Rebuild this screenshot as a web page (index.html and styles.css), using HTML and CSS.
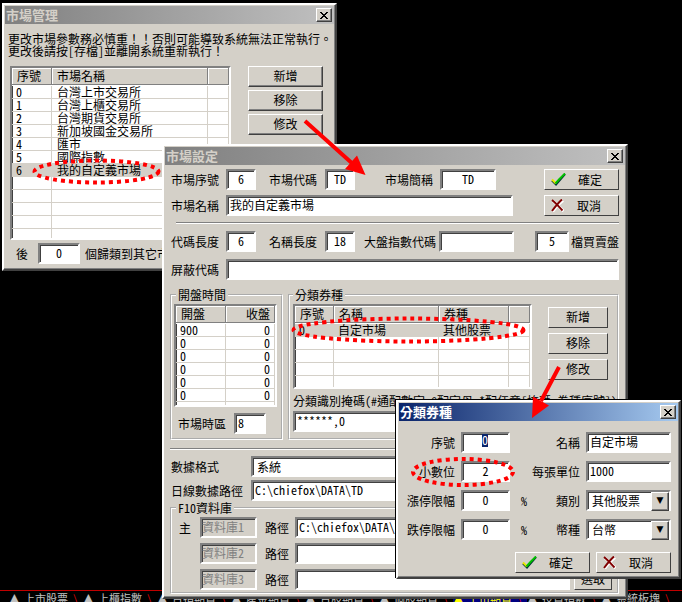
FILE: index.html
```html
<!DOCTYPE html>
<html lang="zh-Hant">
<head>
<meta charset="utf-8">
<meta name="viewport" content="width=device-width, initial-scale=1">
<title>市場管理</title>
<link rel="stylesheet" href="styles.css">
</head>
<body>
<svg class="defs" aria-hidden="true">
  <symbol id="close" viewBox="0 0 8 7"><path d="M0 0h2v1h1v1h2V1h1V0h2v1H7v1H6v1H5v1h1v1h1v1h1v1H6V6H5V5H3v1H2v1H0V6h1V5h1V4h1V3H2V2H1V1H0z"/></symbol>
  <symbol id="check" viewBox="0 0 15 13"><path d="M1 7.500l4 4L14 1" fill="none" stroke="#033" stroke-width="2"/><path d="M1 6.500l4 4" fill="none" stroke="#e8e800" stroke-width="2"/><path d="M4.500 10.500L8 6.500 14 .5" fill="none" stroke="#00c000" stroke-width="2"/></symbol>
  <symbol id="cross" viewBox="0 0 13 13"><path d="M1.500 1.500C5 4 8 8 12 11.500M11.500 1C7 4 4 8 1 12" fill="none" stroke="#fff" stroke-width="3" transform="translate(.6 .6)"/><path d="M1 1C5 4 8 8 11.500 11.500M11 .5C7 4 4 8 1 12" fill="none" stroke="#800000" stroke-width="2"/></symbol>
</svg>

<nav class="tabs" aria-label="板塊">
  <a href="#t1">上市股票</a><a href="#t2">上櫃指數</a><a href="#t3">台指期貨</a><a href="#t4">產金期貨</a><a href="#t5">台股期貨</a><a href="#t6">個股期貨</a><a href="#t7" class="current">上市期貨</a><a href="#t8">投資指數</a><a href="#t9">系統板塊</a>
</nav>

<section class="window manager" aria-labelledby="manager-title">
  <header class="titlebar"><h1 id="manager-title">市場管理</h1><button class="close" aria-label="關閉"><svg><use href="#close"/></svg></button></header>
  <div class="body">
    <p>更改市場參數務必慎重！！否則可能導致系統無法正常執行。<br>更改後請按<span class="half">[</span>存檔<span class="half">]</span>並離開系統重新執行！</p>
    <div class="list-and-actions">
      <div class="list markets">
        <table>
          <colgroup><col class="c-no"><col class="c-name"><col></colgroup>
          <thead><tr><th>序號</th><th>市場名稱</th><th></th></tr></thead>
          <tbody>
            <tr><td>0</td><td>台灣上市交易所</td><td></td></tr>
            <tr><td>1</td><td>台灣上櫃交易所</td><td></td></tr>
            <tr><td>2</td><td>台灣期貨交易所</td><td></td></tr>
            <tr><td>3</td><td>新加坡國金交易所</td><td></td></tr>
            <tr><td>4</td><td>匯市</td><td></td></tr>
            <tr><td>5</td><td>國際指數</td><td></td></tr>
            <tr class="selected"><td>6</td><td>我的自定義市場</td><td></td></tr>
            <tr><td></td><td></td><td></td></tr>
            <tr><td></td><td></td><td></td></tr>
            <tr><td></td><td></td><td></td></tr>
            <tr><td></td><td></td><td></td></tr>
            <tr><td></td><td></td><td></td></tr>
          </tbody>
        </table>
      </div>
      <div class="actions">
        <button class="btn">新增</button>
        <button class="btn">移除</button>
        <button class="btn">修改</button>
      </div>
    </div>
    <div class="after"><label for="after">後</label><input id="after" class="num" value="0"><span>個歸類到其它市場</span></div>
  </div>
</section>

<section class="window settings" aria-labelledby="settings-title">
  <header class="titlebar"><h1 id="settings-title">市場設定</h1><button class="close" aria-label="關閉"><svg><use href="#close"/></svg></button></header>
  <div class="body">
    <div class="rows">
      <div class="row">
        <label for="m-no">市場序號</label><input id="m-no" class="num w-small" value="6">
        <label for="m-code" class="second">市場代碼</label><input id="m-code" class="num w-small" value="TD">
        <label for="m-short" class="short">市場簡稱</label><input id="m-short" class="num w-short" value="TD">
        <button class="btn icon-btn end"><svg class="check"><use href="#check"/></svg><span>確定</span></button>
      </div>
      <div class="row">
        <label for="m-name">市場名稱</label><input id="m-name" class="grow" value="我的自定義市場">
        <button class="btn icon-btn name-end"><svg class="cross"><use href="#cross"/></svg><span>取消</span></button>
      </div>
    </div>
    <hr>
    <div class="rows wide">
      <div class="row">
        <label for="code-len">代碼長度</label><input id="code-len" class="num w-small" value="6">
        <label for="name-len" class="second">名稱長度</label><input id="name-len" class="num w-small" value="18">
        <label for="index-code" class="index">大盤指數代碼</label><input id="index-code" class="w-index">
        <input id="depth" class="num w-depth end" value="5"><label for="depth" class="depth">檔買賣盤</label>
      </div>
      <div class="row">
        <label for="mask-code">屏蔽代碼</label><input id="mask-code" class="grow">
      </div>
    </div>
    <div class="groups">
      <fieldset class="hours">
        <legend>開盤時間</legend>
        <div class="list">
          <table>
            <colgroup><col class="c-open"><col></colgroup>
            <thead><tr><th>開盤</th><th>收盤</th></tr></thead>
            <tbody>
              <tr><td>900</td><td>0</td></tr>
              <tr><td>0</td><td>0</td></tr>
              <tr><td>0</td><td>0</td></tr>
              <tr><td>0</td><td>0</td></tr>
              <tr><td>0</td><td>0</td></tr>
              <tr><td>0</td><td>0</td></tr>
              <tr><td></td><td></td></tr>
            </tbody>
          </table>
        </div>
        <div class="zone"><label for="zone">市場時區</label><input id="zone" value="8"></div>
      </fieldset>
      <fieldset class="kinds">
        <legend>分類券種</legend>
        <div class="kinds-top">
          <div class="list">
            <table>
              <colgroup><col class="c-no"><col class="c-name"><col class="c-kind"><col></colgroup>
              <thead><tr><th>序號</th><th>名稱</th><th>券種</th><th></th></tr></thead>
              <tbody>
                <tr class="selected"><td>0</td><td>自定市場</td><td>其他股票</td><td></td></tr>
                <tr><td></td><td></td><td></td><td></td></tr>
                <tr><td></td><td></td><td></td><td></td></tr>
                <tr><td></td><td></td><td></td><td></td></tr>
                <tr><td></td><td></td><td></td><td></td></tr>
              </tbody>
            </table>
          </div>
          <div class="actions">
            <button class="btn">新增</button>
            <button class="btn">移除</button>
            <button class="btn">修改</button>
          </div>
        </div>
        <label class="mask-label" for="mask">分類識別掩碼(#通配數字,@配字母,*配任意[掩碼,券種序號])</label>
        <input id="mask" class="mask" value="******,0">
      </fieldset>
    </div>
    <hr class="full">
    <div class="rows data">
      <div class="row"><label for="format">數據格式</label><select id="format" class="grow"><option>系統</option></select></div>
      <div class="row"><label for="path">日線數據路徑</label><input id="path" class="grow" value="C:\chiefox\DATA\TD"></div>
    </div>
    <fieldset class="f10">
      <legend>F10資料庫</legend>
      <div class="f10-row"><span>主</span><input aria-label="資料庫1" value="資料庫1" disabled><label for="p1">路徑</label><input id="p1" value="C:\chiefox\DATA\TD"><button class="btn">選取</button></div>
      <div class="f10-row"><span></span><input aria-label="資料庫2" value="資料庫2" disabled><label for="p2">路徑</label><input id="p2"><button class="btn">選取</button></div>
      <div class="f10-row"><span></span><input aria-label="資料庫3" value="資料庫3" disabled><label for="p3">路徑</label><input id="p3"><button class="btn">選取</button></div>
    </fieldset>
  </div>
</section>

<section class="window category active" aria-labelledby="category-title">
  <header class="titlebar"><h1 id="category-title">分類券種</h1><button class="close" aria-label="關閉"><svg><use href="#close"/></svg></button></header>
  <div class="body">
    <div class="form">
      <label for="k-no">序號</label><div class="box"><span class="sel">0</span><input id="k-no" aria-label="序號"></div><span></span><label for="k-name">名稱</label><input id="k-name" value="自定市場">
      <label for="k-dec">小數位</label><input id="k-dec" class="num" value="2"><span></span><label for="k-unit">每張單位</label><input id="k-unit" value="1000">
      <label for="k-up">漲停限幅</label><input id="k-up" class="num" value="0"><span>%</span><label for="k-type">類別</label><div class="combo"><select id="k-type"><option>其他股票</option></select></div>
      <label for="k-down">跌停限幅</label><input id="k-down" class="num" value="0"><span>%</span><label for="k-cur">幣種</label><div class="combo"><select id="k-cur"><option>台幣</option></select></div>
    </div>
    <div class="confirm">
      <button class="btn icon-btn"><svg class="check"><use href="#check"/></svg><span>確定</span></button>
      <button class="btn icon-btn"><svg class="cross"><use href="#cross"/></svg><span>取消</span></button>
    </div>
  </div>
</section>

<svg class="marks" width="682" height="602" aria-hidden="true">
  <g class="rings"><ellipse cx="96.500" cy="171.500" rx="62" ry="11"/><ellipse cx="408.500" cy="330" rx="115" ry="11.500"/><ellipse cx="463" cy="472" rx="50" ry="13"/></g>
  <g class="arrows"><path d="M305 121L354 165M559 367L541 401"/><path class="head" d="M365.500 175L345 169L357 155.500zM532 418L533 396.500L549 405.500z"/></g>
</svg>
</body>
</html>
```
FILE: styles.css
```css
:root {
  --face: #d4d0c8;
  --shade: #808080;
  --dark: #404040;
}
* { box-sizing: border-box; }
body {
  display: flex;
  flex-direction: column;
  min-height: 100vh;
  margin: 0;
  overflow: hidden;
  background: #000;
  color: #000;
  font: 12px/12px "Noto Sans CJK TC", sans-serif;
  font-feature-settings: "hwid";
}
button, input, select {
  margin: 0;
  font: inherit;
  font-feature-settings: inherit;
  color: inherit;
  border-radius: 0;
}
.defs { position: absolute; width: 0; height: 0; }

/* Windows */
.window {
  position: absolute;
  padding: 1px;
  background: var(--face);
  border: 2px solid;
  border-color: #fff var(--dark) var(--dark) #fff;
  box-shadow: inset -1px -1px var(--shade);
}
.manager { left: 2px; top: 3px; width: 335px; }
.settings { left: 162px; top: 144px; width: 466px; }
.category { left: 396px; top: 400px; width: 285px; box-shadow: inset -1px -1px var(--shade), -1px -1px #000; }
.titlebar {
  display: flex;
  align-items: center;
  justify-content: space-between;
  height: 18px;
  padding: 0 2px 0 1px;
  background: linear-gradient(90deg, #808080, #c0c0c0);
  color: var(--face);
}
.active .titlebar { background: linear-gradient(90deg, #0a246a, #a6caf0); color: #fff; }
h1 { margin: 0; font-size: 13px; line-height: 14px; font-weight: 700; }
.close {
  display: grid;
  place-items: center;
  width: 16px;
  height: 14px;
  padding: 0;
}
.close svg { width: 8px; height: 7px; }
.close, .btn {
  background: var(--face);
  border: 1px solid;
  border-color: #fff var(--dark) var(--dark) #fff;
  box-shadow: inset -1px -1px var(--shade);
}
.btn {
  width: 75px;
  height: 21px;
  padding: 0 0 2px;
  text-align: center;
}
.settings .btn, .category .btn { box-shadow: none; }
.icon-btn, .settings .icon-btn { display: flex; align-items: center; padding: 0 4px 0 6px; }
.icon-btn span { flex: 1; }
.check { width: 15px; height: 13px; }
.cross { width: 13px; height: 13px; }

/* Sunken controls */
input, select, .list, .box {
  border: 2px solid;
  border-color: var(--shade) #fff #fff var(--shade);
  box-shadow: inset 1px 1px var(--dark);
  background: #fff;
}
input, select, .box { min-width: 0; height: 21px; padding: 0 2px 3px; }
select { appearance: none; padding: 0 4px 0; }
input:disabled { background: var(--face); color: var(--shade); }
.num { text-align: center; }
.list { overflow: hidden; }
table { width: 100%; table-layout: fixed; border-spacing: 0; }
th {
  height: 18px;
  padding: 0 5px 2px;
  background: var(--face);
  border-bottom: 1px solid #fff;
  box-shadow: inset -1px -1px var(--shade), inset 1px 1px #fff;
  font-weight: 400;
  text-align: left;
}
td {
  height: 13px;
  padding: 0 4px;
  border-right: 1px solid var(--face);
  border-bottom: 1px solid var(--face);
  line-height: 12px;
  white-space: nowrap;
}
.selected td:not(:last-child) { background: var(--face); }

hr { height: 2px; margin: 6px 0 7px 6px; border: 0; background: linear-gradient(var(--shade) 50%, #fff 50%); }
hr.full { margin: 8px 0 6px; }
fieldset {
  min-width: 0;
  margin: 0;
  padding: 3px 0 0;
  border: 2px groove #fff;
}
legend { margin-left: 4px; padding: 0 2px; }

/* Market manager */
.manager .body { padding: 9px 11px 4px 3px; }
.manager p { margin: 0 0 9px; font-feature-settings: normal; white-space: nowrap; }
.half { font-feature-settings: "hwid"; }
.list-and-actions { display: flex; justify-content: space-between; padding: 0 0 0 2px; }
.markets { flex: 1; height: 174px; margin-right: 17px; }
.markets .c-no { width: 40px; }
.markets .c-name { width: 156px; }
.markets td:nth-child(2) { padding-left: 5px; }
.actions { display: flex; flex-direction: column; gap: 3px; }
.after { display: flex; align-items: center; gap: 5px; padding: 3px 0 0 8px; }
.after input { width: 42px; margin-left: 5px; }

/* Market settings */
.settings .body { padding: 4px 6px 2px 5px; }
.rows { display: flex; flex-direction: column; gap: 5px; }
.rows.wide { gap: 7px; margin-bottom: 9px; }
.rows.data { gap: 3px; margin-bottom: 1px; }
.row { display: flex; align-items: center; }
.row label { width: 56px; padding-left: 1px; white-space: nowrap; }
.row .second { margin-left: 12px; width: 57px; }
.row .short { margin-left: 29px; }
.row .index { width: 76px; margin-left: 8px; }
.row .depth { width: 50px; padding-left: 2px; }
.w-small { width: 30px; }
.w-short { width: 56px; }
.w-index { width: 75px; }
.w-depth { width: 34px; }
.end { margin-left: auto; }
.name-end { margin-left: 31px; }
.grow { flex: 1; }
.data label { width: 81px; }
.groups { display: grid; grid-template-columns: 113px 1fr; gap: 5px; }
.hours .list { height: 103px; margin: 0 4px 0 2px; }
.c-open { width: 50px; }
.hours td:last-child, .hours th:last-child { text-align: right; }
.zone { display: flex; align-items: center; gap: 8px; padding: 6px 0 4px 6px; }
.zone input { width: 32px; }
.kinds { padding: 3px 9px 4px 3px; }
.kinds legend { margin-left: 0; }
.kinds-top { display: flex; justify-content: space-between; margin-bottom: 6px; }
.kinds .list { flex: 1; height: 85px; margin-right: 16px; }
.kinds .c-no { width: 39px; }
.kinds .c-name { width: 105px; }
.kinds .c-kind { width: 70px; }
.kinds .actions { gap: 5px; padding-top: 3px; }
.kinds .btn { width: 60px; }
.mask-label { display: block; margin-bottom: 4px; white-space: nowrap; }
.mask { display: block; width: 100%; }
.f10 { padding: 3px 5px 2px 0; }
.f10-row { display: grid; grid-template-columns: 21px 57px 38px 1fr 38px; align-items: center; padding-left: 7px; }
.f10-row + .f10-row { margin-top: 5px; }
.f10-row label { padding-left: 8px; }
.f10-row input:disabled { padding-left: 0; }
.f10-row .btn { width: 38px; }
.f10-row > input:nth-child(4) { margin-right: 4px; }

/* Category dialog */
.category .body { padding: 11px 7px 3px 0; }
.form {
  display: grid;
  grid-template-columns: 56px 49px 8px 1fr 85px;
  column-gap: 6px;
  row-gap: 8px;
  align-items: center;
}
.form label { text-align: right; white-space: nowrap; }
.form > span { padding-left: 5px; }
.form .num { width: 49px; }
.box { display: flex; justify-content: center; padding-bottom: 2px; }
.form .sel { height: 13px; background: #0a246a; color: #fff; }
.box input { width: 1px; height: 12px; padding: 0; border: 0; box-shadow: none; background: none; }
.combo { position: relative; }
.combo select { display: block; width: 100%; }
.combo::after {
  content: "▼";
  position: absolute;
  top: 2px;
  right: 2px;
  width: 16px;
  height: 17px;
  background: var(--face);
  border: 1px solid;
  border-color: #fff var(--dark) var(--dark) #fff;
  box-shadow: inset -1px -1px var(--shade);
  font: 9px/15px "DejaVu Sans", sans-serif;
  text-align: center;
  pointer-events: none;
}
.confirm { display: flex; justify-content: flex-end; gap: 6px; margin-top: 12px; }

/* Board tabs along the bottom edge */
.tabs {
  display: flex;
  height: 12px;
  margin-top: auto;
  padding-left: 9px;
  overflow: hidden;
  border-top: 1px solid #c00000;
  font-size: 11px;
  white-space: nowrap;
}
.tabs a { flex: none; width: 74px; color: #c0c0c0; line-height: 14px; text-decoration: none; }
.tabs a::before { content: "▲"; display: inline-block; width: 15px; font: 14px/14px "DejaVu Sans", sans-serif; }
.tabs a::after { content: "\\"; margin-left: 5px; color: #e00000; }
.tabs .current { background: #000080; color: #ff0; }

/* Hand-drawn highlights */
.marks { position: absolute; left: 0; top: 0; pointer-events: none; }
.rings { fill: none; stroke: #f00; stroke-width: 4; stroke-dasharray: 4 4; }
.arrows { fill: none; stroke: #f00; stroke-width: 4; }
.head { fill: #f00; stroke: none; }
```
